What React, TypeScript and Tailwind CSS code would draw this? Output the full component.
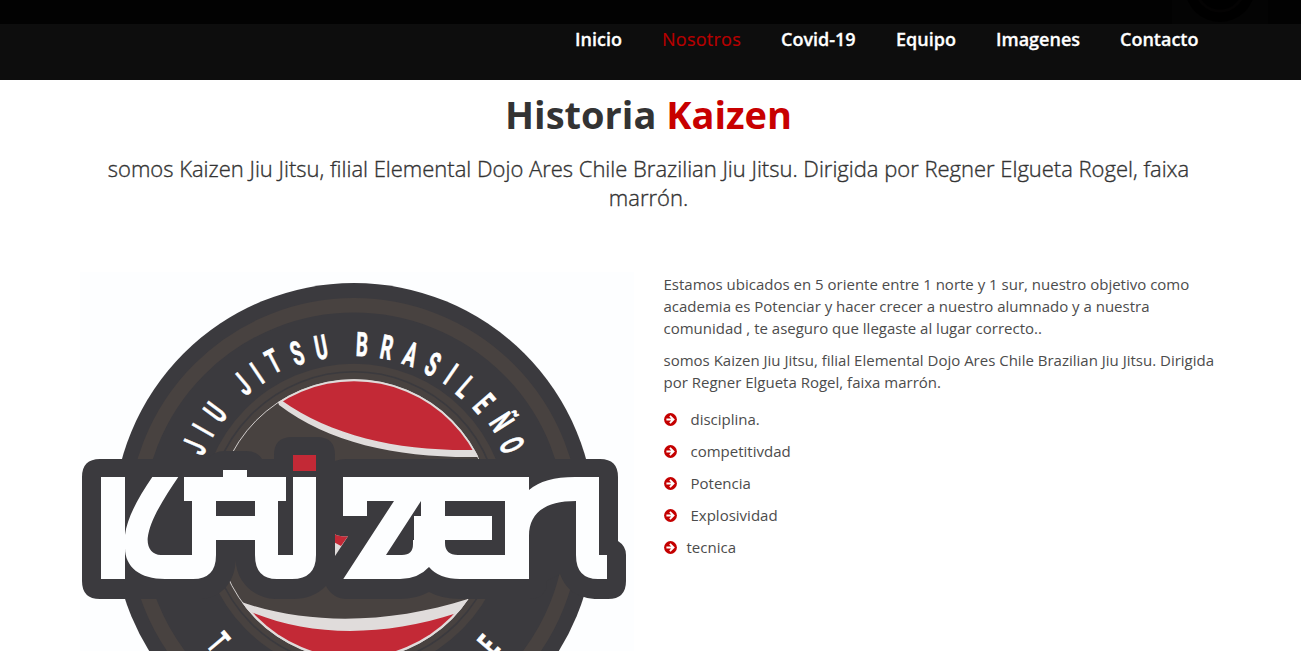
import React from "react";

const navItems = [
  { label: "Inicio", width: "w-[47px]" },
  { label: "Nosotros", width: "w-[79px]", active: true },
  { label: "Covid-19", width: "w-[75px]" },
  { label: "Equipo", width: "w-[60px]" },
  { label: "Imagenes", width: "w-[84px]" },
  { label: "Contacto", width: "w-[78px]" },
];

const values = [
  { label: "disciplina.", gap: "ml-[14px]" },
  { label: "competitivdad", gap: "ml-[14px]" },
  { label: "Potencia", gap: "ml-[14px]" },
  { label: "Explosividad", gap: "ml-[14px]" },
  { label: "tecnica", gap: "ml-[10px]" },
];

const CX = 354;
const CY = 516;

// Letters of the badge, each with the centre of its glyph.
const topLetters: [string, number, number][] = [
  ["J", 194, 447], ["I", 203, 430], ["U", 215, 412],
  ["J", 242, 384], ["I", 257, 373], ["T", 273, 361], ["S", 297, 353], ["U", 321, 347],
  ["B", 362, 344], ["R", 387, 347], ["A", 411, 354], ["S", 433, 364], ["I", 451, 374],
  ["L", 466, 387], ["E", 484, 403], ["Ñ", 502, 422], ["O", 512, 445],
];

function BadgeLetter({ char, x, y, angle }: { char: string; x: number; y: number; angle: number }) {
  return (
    <text
      transform={`translate(${x} ${y}) rotate(${angle}) scale(0.56 1)`}
      y="12"
      textAnchor="middle"
      fontFamily="Roboto, sans-serif"
      fontWeight="700"
      fontSize="33.5"
      fill="#fff"
      stroke="#fff"
      strokeWidth="0.7"
    >
      {char}
    </text>
  );
}

function KaizenLogo() {
  return (
    <svg viewBox="80 272 554 379" className="block h-[379px] w-[554px]">
      <defs>
        <clipPath id="disc"><ellipse cx={CX} cy="519.4" rx="137.2" ry="138.2" /></clipPath>
        <clipPath id="rim"><ellipse cx={CX} cy="519.6" rx="139" ry="140.4" /></clipPath>
      </defs>
      <rect x="80" y="272" width="554" height="379" fill="#fdfeff" />
      <circle cx="354" cy="524" r="241" fill="#3b3a3e" />
      <circle cx="354" cy="524" r="218.7" fill="none" stroke="#484240" strokeWidth="14.5" />
      <ellipse cx={CX} cy="519" rx="153.6" ry="155.3" fill="#484240" />
      <ellipse cx={CX} cy="519" rx="145.8" ry="147.2" fill="none" stroke="#3b3a3e" strokeWidth="1.6" />
      <ellipse cx={CX} cy="519.6" rx="138.5" ry="140" fill="none" stroke="#e0dcdb" strokeWidth="0.9" />
      <g clipPath="url(#rim)">
        <path d="M278 402 L278 370 H490 V457 H477 C400 458 330 444 279 405 Z" fill="#e0dcdb" />
        <path d="M236 600 C305 626 390 624 468 599 H500 V660 H236 Z" fill="#e0dcdb" />
      </g>
      <g clipPath="url(#disc)">
        <path d="M281 400 V370 H490 V450 H473 C400 451 333 437 281 400 Z" fill="#c32936" />
        <path d="M251 612 C310 636 380 638 457 613 H500 V660 H251 Z" fill="#c32936" />
      </g>
      {topLetters.map(([char, x, y], i) => (
        <BadgeLetter key={i} char={char} x={x} y={y} angle={(Math.atan2(x - CX, CY - y) * 180) / Math.PI} />
      ))}
      <BadgeLetter char="T" x={218.5} y={642} angle={50} />
      <BadgeLetter char="E" x={488.5} y={645} angle={-49} />
      <path
        fill="#3b3a3e"
        d="M82 477 Q82 459 100 459 H208 Q214 451 224 451 H246 Q257 451 262 459 H274 V455 Q274 437 292 437 H317 Q335 437 335 455 V461 Q340 459 346 459 H600 Q618 459 618 477 V541 Q626 546 626 555 V581 Q626 599 608 599 H599 Q590 599 584 597 Q567 593 560 574 L547 581 Q547 599 529 599 H460 Q442 599 429 592 Q416 599 400 599 H347 Q333 599 326 586 Q313 599 293 599 H275 C252 598 236 580 235.7 560 C235 583 220 599 200 599 H100 Q82 599 82 581 Z"
      />
      <path d="M335 534.3 Q339 537 348 536.3 L335 556 Z" fill="#e0dcdb" />
      <path d="M335 534.3 Q339 537 348 536.3 L341 546 L335 542.7 Z" fill="#c32936" />
      <rect x="293" y="455" width="23" height="16" fill="#c32936" />
      <g fill="#fdfeff" fillRule="evenodd">
        <rect x="101" y="477" width="24" height="102" />
        <path d="M152.3 477 H178.3 C165 497 150 519 147.7 538 C147 548 152 555 161 555 H192 V501 H184 V477 H223 V470 H247 V477 H286 V501 H278 V555 H293 V477 H316 V555 Q316 579 292 579 H277 Q255 579 255 555 V540 H216 V555 Q216 579 193 579 H165 C140 579 125 567 125 548 V535 C127 518 138 498 152.3 477 Z M216 501 H255 V516 H216 Z" />
        <path d="M343 477 H529 V490 Q544 477 575 477 H599 V555 H607 V579 H598 Q576 579 576 555 V501 C545 501 529 513 529 536 V579 H460 Q439 579 429 567 Q418 579 400 579 H343.3 L394 501 H367 V516 H343 Z M421 501 L386 555 H402 Q413 555 413 544 V540 H414 V516 H421 Z M445 501 H505 V555 H458 Q445 555 445 543 V540 H492 V516 H445 Z" />
      </g>
    </svg>
  );
}

function ArrowBullet() {
  return (
    <svg viewBox="0 0 13 13" className="size-[13px] shrink-0">
      <circle cx="6.5" cy="6.5" r="6.4" fill="#c40000" />
      <path d="M2.4 6.5 H9 M5.9 2.9 L9.5 6.5 L5.9 10.1" fill="none" stroke="#fff" strokeWidth="1.9" />
    </svg>
  );
}

export default function App() {
  return (
    <div className="h-[651px] w-[1301px] overflow-hidden bg-white font-['Open_Sans',sans-serif] text-[#333]">
      <header className="h-20 bg-[#0d0d0d]">
        <div className="flex h-6 justify-end overflow-hidden bg-[#020202] pr-[33px]">
          <svg viewBox="0 0 96 24" className="h-6 w-24">
            <rect width="96" height="24" fill="#040404" />
            <circle cx="48" cy="-13" r="35" fill="#000" />
            <circle cx="48" cy="-13" r="24" fill="none" stroke="#040303" strokeWidth="3" />
          </svg>
        </div>
        <nav className="flex justify-end gap-10 pr-[103px] pt-[3px] text-lg leading-[25px]">
          {navItems.map((item) => (
            <a
              key={item.label}
              className={`${item.width} whitespace-nowrap ${item.active ? "font-normal tracking-[0.25px] text-[#b80000] [-webkit-text-stroke:0.2px]" : "font-semibold text-white [-webkit-text-stroke:0.3px]"}`}
            >
              {item.label}
            </a>
          ))}
        </nav>
      </header>
      <main>
        <section className="px-20 pt-3 text-center">
          <h2 className="pr-[4px] text-[38px] font-bold leading-[44px]">
            Historia <span className="text-[#c80000]">Kaizen</span>
          </h2>
          <p className="mt-[18px] pr-[4px] text-[22px] font-light leading-[29px] tracking-[-0.01px] [-webkit-text-stroke:0.35px]">
            somos Kaizen Jiu Jitsu, filial Elemental Dojo Ares Chile Brazilian Jiu Jitsu. Dirigida por Regner Elgueta Rogel, faixa
            <br />
            marrón.
          </p>
        </section>
        <section className="flex gap-[29.5px] pl-20 pt-[60px]">
          <KaizenLogo />
          <div className="pt-px text-[15px] leading-[22px] text-[#4c4c4c]">
            <p className="whitespace-nowrap">
              Estamos ubicados en 5 oriente entre 1 norte y 1 sur, nuestro objetivo como
              <br />
              academia es Potenciar y hacer crecer a nuestro alumnado y a nuestra
              <br />
              comunidad , te aseguro que llegaste al lugar correcto..
            </p>
            <p className="mt-[10px] whitespace-nowrap">
              somos Kaizen Jiu Jitsu, filial Elemental Dojo Ares Chile Brazilian Jiu Jitsu. Dirigida
              <br />
              por Regner Elgueta Rogel, faixa marrón.
            </p>
            <ul className="mt-[15px] flex flex-col gap-[10px]">
              {values.map((value) => (
                <li key={value.label} className="flex items-center">
                  <ArrowBullet />
                  <span className={value.gap}>{value.label}</span>
                </li>
              ))}
            </ul>
          </div>
        </section>
      </main>
    </div>
  );
}
